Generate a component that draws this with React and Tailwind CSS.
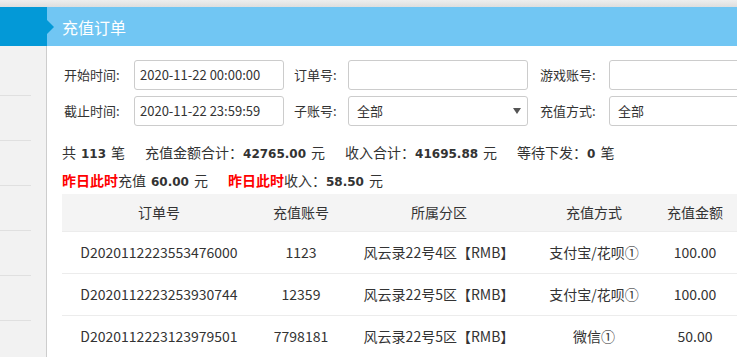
import React from "react";

const cols = "grid grid-cols-[194px_90px_186px_124px_78px_120px]";

const rows = [
  ["D2020112223553476000", "1123", "风云录22号4区【RMB】", "支付宝/花呗①", "100.00"],
  ["D2020112223253930744", "12359", "风云录22号5区【RMB】", "支付宝/花呗①", "100.00"],
  ["D2020112223123979501", "7798181", "风云录22号5区【RMB】", "微信①", "50.00"],
];

function Num({ children, l = true }) {
  return (
    <b className={`font-['DejaVu_Sans',sans-serif] font-bold text-[12px] mr-[5px] ${l ? "ml-[5px]" : ""}`}>
      {children}
    </b>
  );
}

function Label({ w, children }) {
  return <div className={`${w} shrink-0 text-[13px] leading-[30px]`}>{children}</div>;
}

export default function App() {
  return (
    <div className="w-[737px] h-[357px] overflow-hidden bg-white flex flex-col font-['Noto_Sans_CJK_SC',sans-serif] text-[#333]">
      <div className="h-[7px] shrink-0 bg-gradient-to-b from-[#eeeeee] to-[#dedede]" />
      <div className="flex flex-1 min-h-0">
        <aside className="w-[47px] shrink-0 flex flex-col relative z-10">
          <div className="h-[39px] shrink-0 bg-[#0399d7] relative">
            <div className="absolute left-full top-[13px] w-0 h-0 border-l-[7px] border-l-[#0399d7] border-y-[7px] border-y-transparent" />
          </div>
          <div className="flex-1 bg-[#f2f2f2] border-r border-[#cdcdcd] pt-[49px]">
            {[0, 1, 2, 3, 4, 5].map((i) => (
              <div key={i} className="w-[31px] h-[45px] border-t border-[#e0e0e0]" />
            ))}
          </div>
        </aside>
        <main className="flex-1 min-w-0 flex flex-col overflow-hidden">
          <div className="h-[39px] shrink-0 bg-[#71c6f3] flex items-center pl-[15px] text-white text-[16px]">
            充值订单
          </div>
          <div className="pt-[14px] pl-[17px] flex flex-col gap-[6px]">
            <div className="flex items-center h-[30px]">
              <Label w="w-[70px]">开始时间:</Label>
              <div className="w-[150px] h-[30px] shrink-0 border border-[#cccccc] rounded-[3px] px-[5px] text-[13px] leading-[28px]">2020-11-22 00:00:00</div>
              <div className="w-[10px] shrink-0" />
              <Label w="w-[54px]">订单号:</Label>
              <div className="w-[180px] h-[30px] shrink-0 border border-[#cccccc] rounded-[3px]" />
              <div className="w-[12px] shrink-0" />
              <Label w="w-[69px]">游戏账号:</Label>
              <div className="w-[180px] h-[30px] shrink-0 border border-[#cccccc] rounded-[3px]" />
            </div>
            <div className="flex items-center h-[30px]">
              <Label w="w-[70px]">截止时间:</Label>
              <div className="w-[150px] h-[30px] shrink-0 border border-[#cccccc] rounded-[3px] px-[5px] text-[13px] leading-[28px]">2020-11-22 23:59:59</div>
              <div className="w-[10px] shrink-0" />
              <Label w="w-[54px]">子账号:</Label>
              <div className="w-[180px] h-[30px] shrink-0 border border-[#cccccc] rounded-[3px] pl-[8px] pr-[6px] text-[13px] leading-[28px] flex items-center justify-between">
                <span>全部</span>
                <svg width="8" height="6" viewBox="0 0 8 6"><path d="M0 0 L8 0 L4 6 Z" fill="#555" /></svg>
              </div>
              <div className="w-[12px] shrink-0" />
              <Label w="w-[69px]">充值方式:</Label>
              <div className="w-[180px] h-[30px] shrink-0 border border-[#cccccc] rounded-[3px] pl-[8px] text-[13px] leading-[28px]">全部</div>
            </div>
          </div>
          <div className="pl-[15px] mt-[12px] text-[14px]">
            <div className="h-[28px] leading-[28px] whitespace-nowrap">
              <span>共<Num>113</Num>笔</span>
              <span className="ml-[20px]">充值金额合计：<Num l={false}>42765.00</Num>元</span>
              <span className="ml-[20px]">收入合计：<Num l={false}>41695.88</Num>元</span>
              <span className="ml-[20px]">等待下发：<Num l={false}>0</Num>笔</span>
            </div>
            <div className="h-[28px] leading-[28px] whitespace-nowrap">
              <span><b className="text-[#ff0000] font-bold">昨日此时</b>充值<Num>60.00</Num>元</span>
              <span className="ml-[20px]"><b className="text-[#ff0000] font-bold">昨日此时</b>收入：<Num l={false}>58.50</Num>元</span>
            </div>
            <div className="w-[792px] text-[14px]">
              <div className={`${cols} h-[37px] bg-[#f4f4f4] items-center text-center`}>
                <div>订单号</div>
                <div>充值账号</div>
                <div>所属分区</div>
                <div>充值方式</div>
                <div>充值金额</div>
                <div />
              </div>
              {rows.map((r) => (
                <div key={r[0]} className={`${cols} h-[42px] border-t border-[#ececec] items-center text-center`}>
                  {r.map((c, i) => (
                    <div key={i} className="whitespace-nowrap">{c}</div>
                  ))}
                  <div />
                </div>
              ))}
              <div className="border-t border-[#ececec]" />
            </div>
          </div>
        </main>
      </div>
    </div>
  );
}
